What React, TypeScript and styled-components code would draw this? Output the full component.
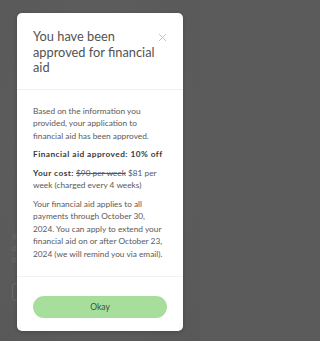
import React from "react";
import styled, { createGlobalStyle } from "styled-components";

const Global = createGlobalStyle`
  html, body { margin: 0; padding: 0; }
  body {
    background: #5b5b5b;
    font-family: "Lato", "Open Sans", sans-serif;
  }
`;

const Page = styled.div`
  position: relative;
  width: 200px;
  height: 341px;
  background: radial-gradient(ellipse at 50% 45%, #626262 0%, #585858 100%);
  overflow: hidden;
`;

const Behind = styled.div`
  position: absolute;
  left: 12px;
  top: 232px;
  font-size: 8px;
  line-height: 11px;
  color: #6c6c6c;
`;

const BehindButton = styled.div`
  position: absolute;
  left: 12px;
  top: 283px;
  width: 20px;
  height: 16px;
  border: 1px solid #6a6a6a;
  border-radius: 3px;
`;

const Overlay = styled.div`
  position: absolute;
  inset: 0;
  display: flex;
  justify-content: center;
  align-items: flex-start;
  padding-top: 13px;
`;

const Modal = styled.div`
  width: 166px;
  background: #ffffff;
  border-radius: 5px;
  display: flex;
  flex-direction: column;
  box-shadow: 0 1px 4px rgba(0, 0, 0, 0.2);
`;

const Header = styled.div`
  display: flex;
  align-items: flex-start;
  justify-content: space-between;
  padding: 16px 16px 13px 16px;
  border-bottom: 1px solid #efefef;
`;

const Title = styled.h2`
  margin: 0;
  font-size: 12.8px;
  line-height: 15.5px;
  font-weight: 400;
  color: #525252;
  width: 126px;
`;

const Close = styled.button`
  border: 0;
  background: none;
  padding: 0;
  margin-top: 4px;
  width: 9px;
  height: 9px;
  display: flex;
  cursor: pointer;
`;

const Body = styled.div`
  padding: 15px 16px 16px 16px;
  display: flex;
  flex-direction: column;
  gap: 6px;
  border-bottom: 1px solid #f2f2f2;
`;

const Para = styled.p`
  margin: 0;
  font-size: 8.3px;
  line-height: 12.5px;
  color: #595959;
`;

const Strong = styled.span`
  font-weight: 700;
  letter-spacing: 0.45px;
  color: #3a3a3a;
`;

const Strike = styled.span`
  text-decoration: line-through;
`;

const Footer = styled.div`
  padding: 19px 16px 13px 16px;
  display: flex;
`;

const Okay = styled.button`
  flex: 1;
  height: 22px;
  border: 0;
  border-radius: 11px;
  background: #a8de9b;
  color: #3e4f3e;
  font-family: "Lato", "Open Sans", sans-serif;
  font-size: 8.5px;
  cursor: pointer;
`;

export default function App() {
  return (
    <>
      <Global />
      <Page>
        <Behind>
          ff<br />d<br />p
        </Behind>
        <BehindButton />
        <Overlay>
          <Modal>
            <Header>
              <Title>You have been approved for financial aid</Title>
              <Close aria-label="Close">
                <svg width="9" height="9" viewBox="0 0 9 9">
                  <path d="M1 1L8 8M8 1L1 8" stroke="#c4c4c4" strokeWidth="1" />
                </svg>
              </Close>
            </Header>
            <Body>
              <Para>
                Based on the information you provided, your application to financial aid has been approved.
              </Para>
              <Para>
                <Strong>Financial aid approved: 10% off</Strong>
              </Para>
              <Para>
                <Strong>Your cost:</Strong> <Strike>$90 per week</Strike> <span>$81 per week (charged every 4 weeks)</span>
              </Para>
              <Para>
                Your financial aid applies to all payments through October 30, 2024. You can apply to extend your
                financial aid on or after October 23, 2024 (we will remind you via email).
              </Para>
            </Body>
            <Footer>
              <Okay>Okay</Okay>
            </Footer>
          </Modal>
        </Overlay>
      </Page>
    </>
  );
}
